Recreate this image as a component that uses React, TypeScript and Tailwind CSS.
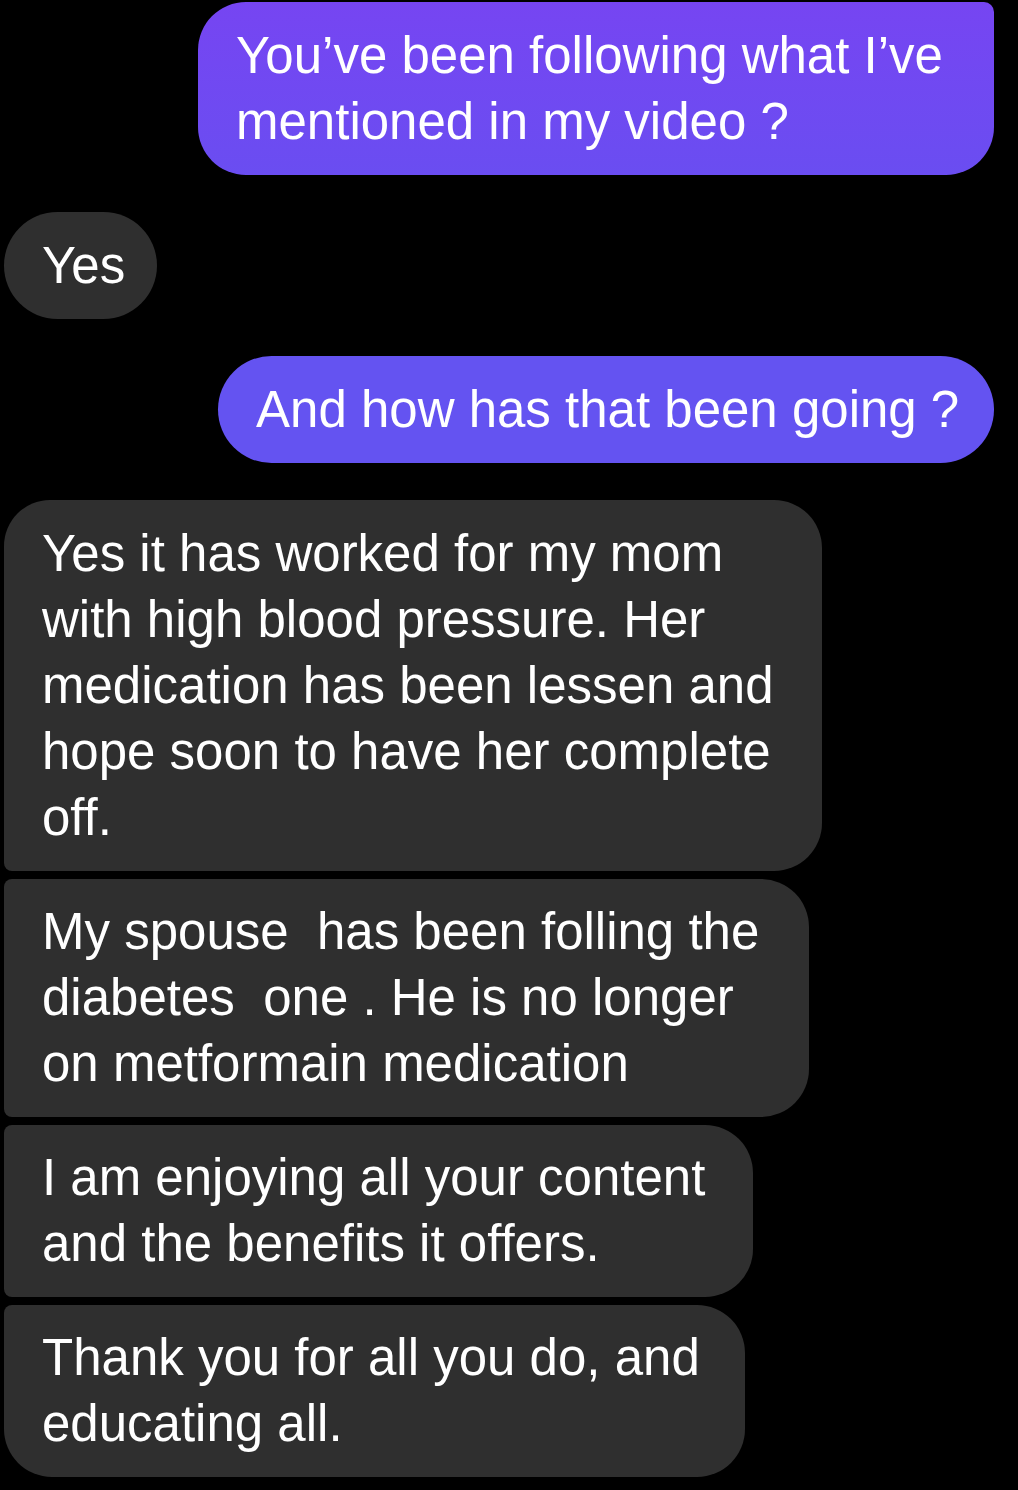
import React from "react";

const font = { fontFamily: '"Liberation Sans", Arial, sans-serif' };

function Lines({ lines }: { lines: string[] }) {
  return (
    <>
      {lines.map((l, i) => (
        <div key={i} className="whitespace-pre">
          {l}
        </div>
      ))}
    </>
  );
}

export default function App() {
  return (
    <div
      className="bg-black w-full min-h-[1490px] flex flex-col pt-[2px] text-white text-[51px] leading-[66px]"
      style={font}
    >
      <div className="self-end mr-[24px] w-[796px] pt-[21px] pb-[20px] pl-[38px] rounded-tl-[48px] rounded-bl-[48px] rounded-br-[48px] rounded-tr-[10px] bg-gradient-to-b from-[#7645f2] to-[#6a4df1]">
        <Lines lines={["You’ve been following what I’ve", "mentioned in my video ?"]} />
      </div>

      <div className="self-start ml-[4px] mt-[37px] w-[153px] pt-[21px] pb-[20px] pl-[38px] rounded-full bg-[#2f2f2f]">
        <Lines lines={["Yes"]} />
      </div>

      <div className="self-end mr-[24px] mt-[37px] w-[776px] pt-[21px] pb-[20px] pl-[38px] rounded-full bg-[#6453f1]">
        <Lines lines={["And how has that been going ?"]} />
      </div>

      <div className="self-start ml-[4px] mt-[37px] w-[818px] pt-[21px] pb-[20px] pl-[38px] rounded-tl-[46px] rounded-tr-[48px] rounded-br-[48px] rounded-bl-[8px] bg-[#2f2f2f]">
        <Lines
          lines={[
            "Yes it has worked for my mom",
            "with high blood pressure. Her",
            "medication has been lessen and",
            "hope soon to have her complete",
            "off.",
          ]}
        />
      </div>

      <div className="self-start ml-[4px] mt-[8px] w-[805px] pt-[20px] pb-[20px] pl-[38px] rounded-tl-[8px] rounded-tr-[48px] rounded-br-[48px] rounded-bl-[8px] bg-[#2f2f2f]">
        <Lines
          lines={[
            "My spouse  has been folling the",
            "diabetes  one . He is no longer",
            "on metformain medication",
          ]}
        />
      </div>

      <div className="self-start ml-[4px] mt-[8px] w-[749px] pt-[20px] pb-[20px] pl-[38px] rounded-tl-[8px] rounded-tr-[48px] rounded-br-[48px] rounded-bl-[8px] bg-[#2f2f2f]">
        <Lines lines={["I am enjoying all your content", "and the benefits it offers."]} />
      </div>

      <div className="self-start ml-[4px] mt-[8px] w-[741px] pt-[20px] pb-[20px] pl-[38px] rounded-tl-[8px] rounded-tr-[48px] rounded-br-[48px] rounded-bl-[48px] bg-[#2f2f2f]">
        <Lines lines={["Thank you for all you do, and", "educating all."]} />
      </div>
    </div>
  );
}
